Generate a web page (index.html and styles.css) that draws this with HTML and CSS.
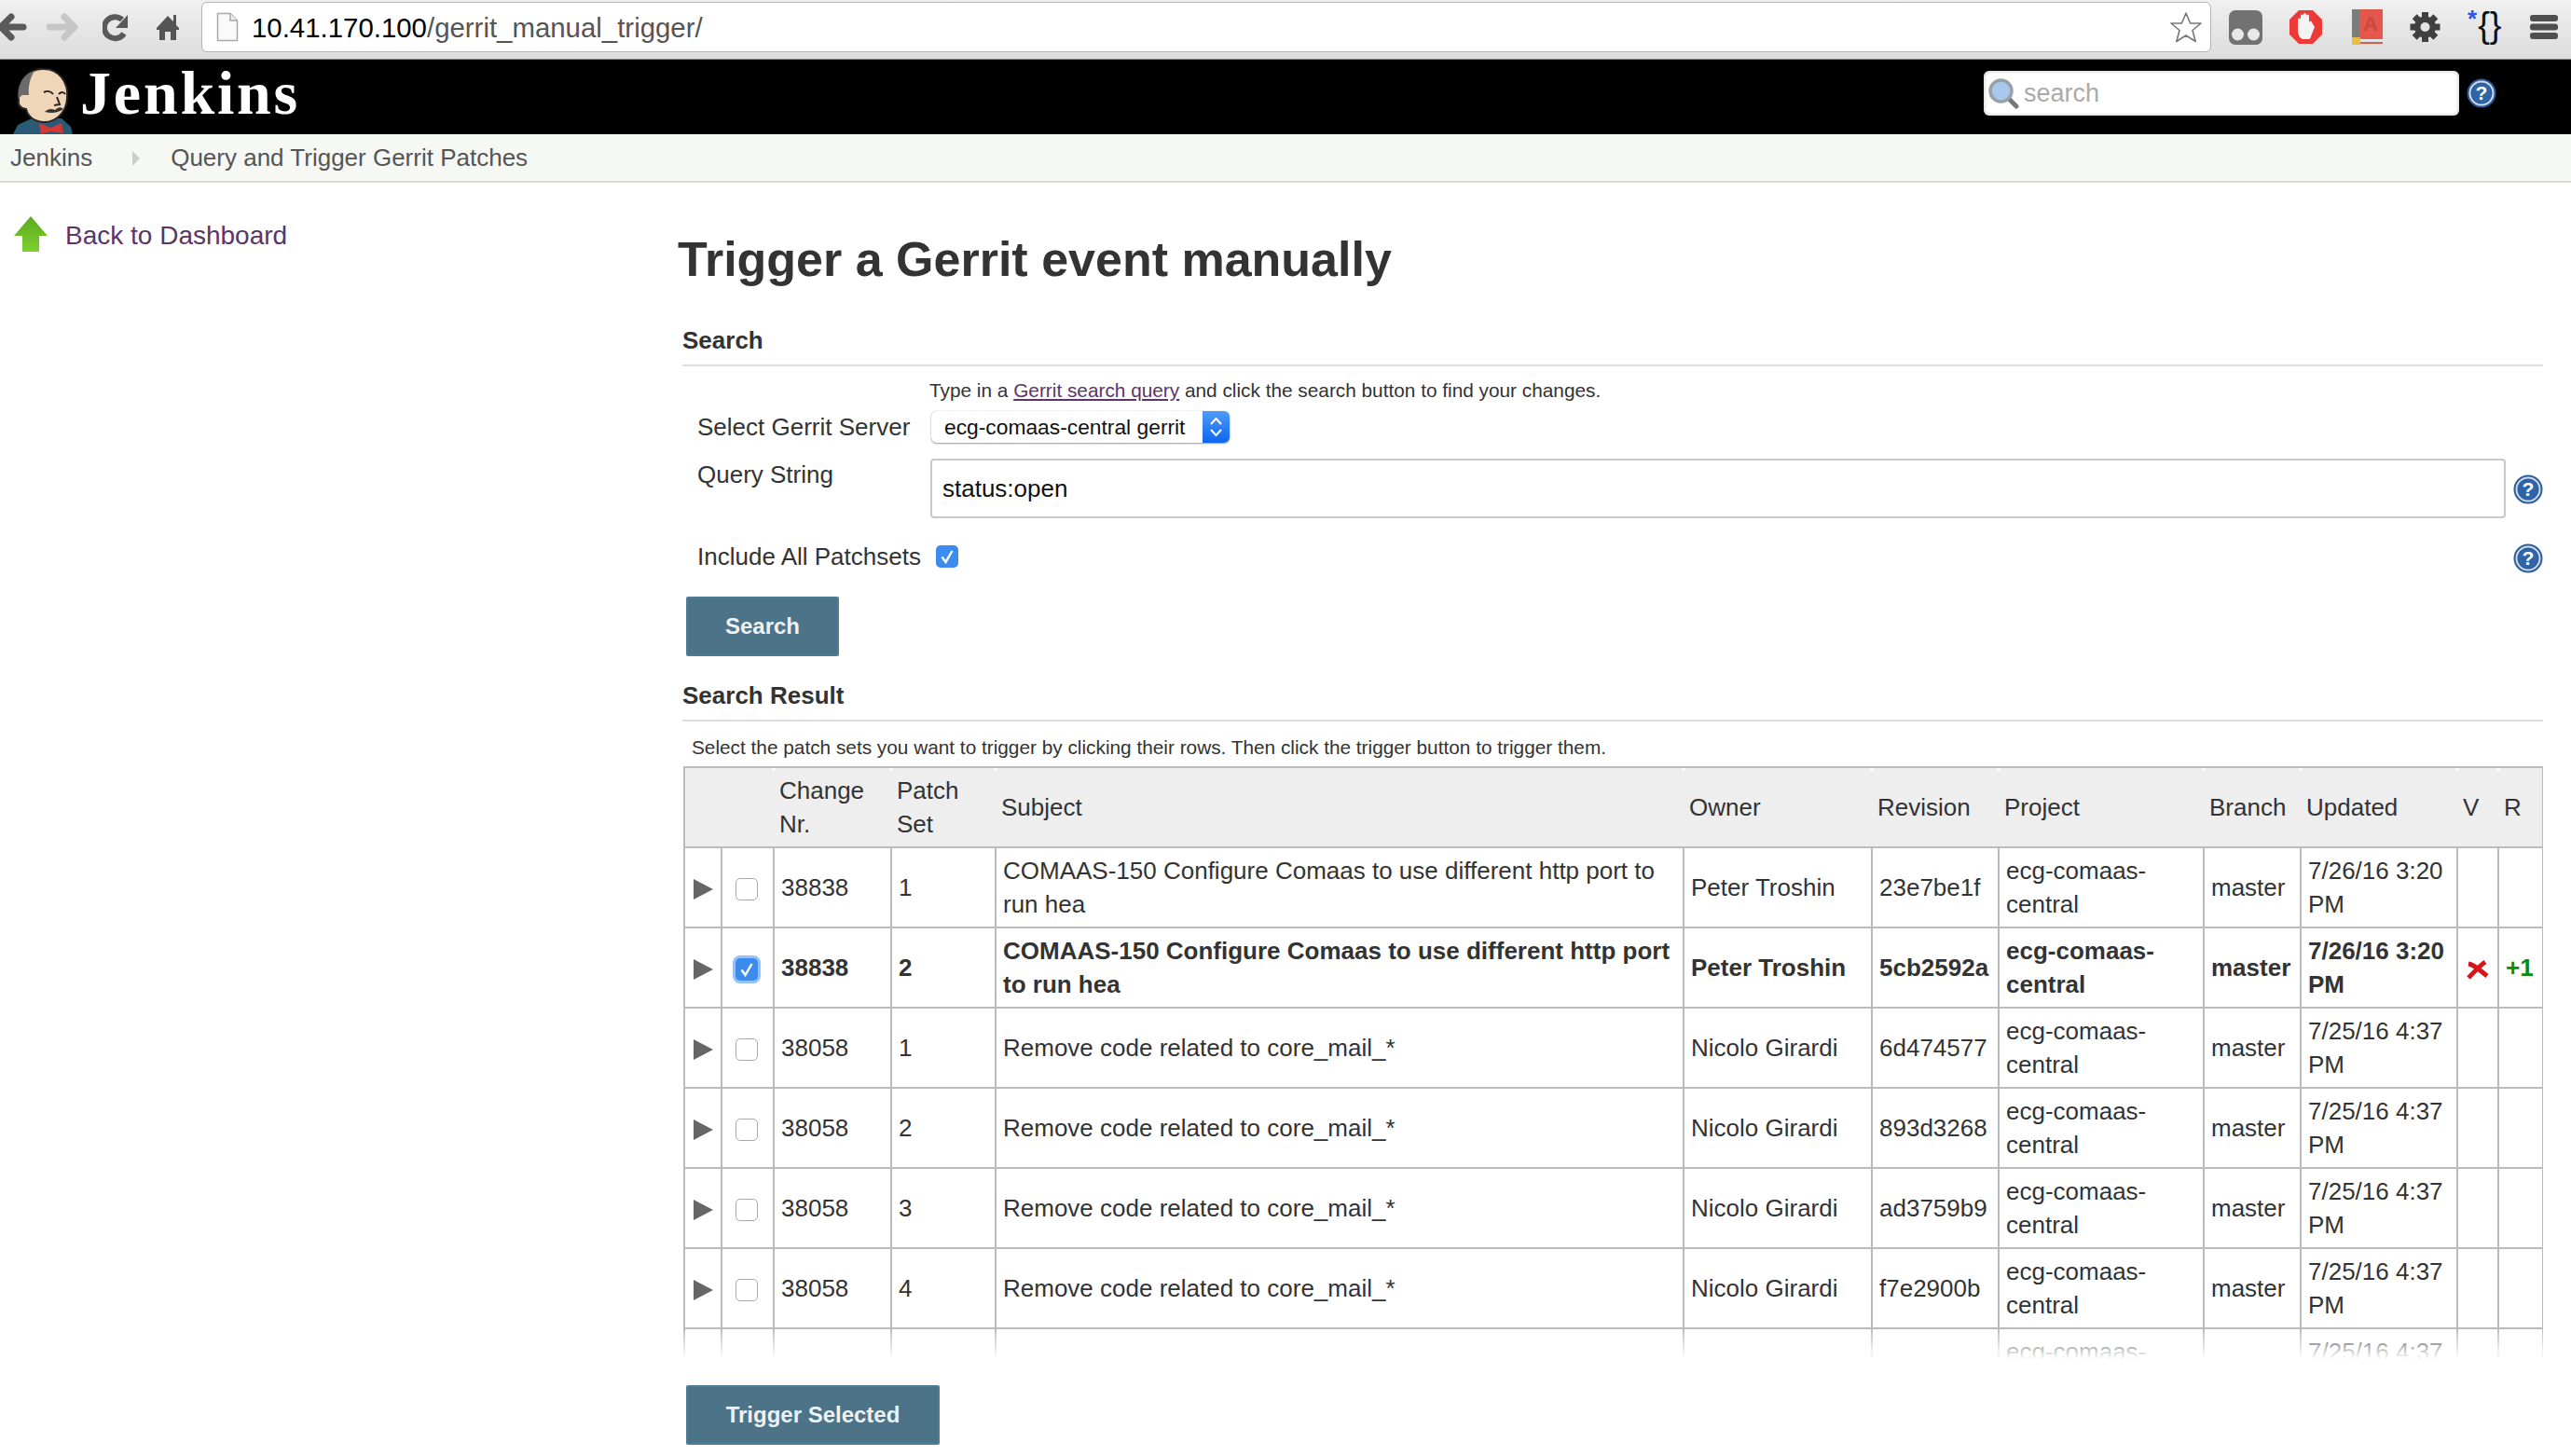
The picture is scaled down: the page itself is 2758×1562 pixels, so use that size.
FILE: index.html
```html
<!DOCTYPE html>
<html>
<head>
  <title>Trigger a Gerrit event manually</title>
  <link rel="stylesheet" href="styles.css">
</head>
<body>
  <svg class="defs" width="0" height="0">
    <symbol id="help" viewBox="0 0 32 32">
      <circle cx="16" cy="16" r="15.5" fill="#2c5c9a"/>
      <circle cx="16" cy="16" r="12.5" fill="none" stroke="#cfdcec" stroke-width="2"/>
      <circle cx="16" cy="16" r="10.5" fill="#2f64a8"/>
      <text x="16" y="23" text-anchor="middle" font-family="Liberation Sans" font-weight="700" font-size="21" fill="#fff">?</text>
    </symbol>
    <symbol id="tick" viewBox="0 0 24 24">
      <path d="M6.5 12.5 L10.5 18 L17.5 6" fill="none" stroke="#fff" stroke-width="2.4"/>
    </symbol>
    <linearGradient id="up" x1="0" y1="0" x2="0" y2="1">
      <stop offset="0" stop-color="#5aa91f"/>
      <stop offset="1" stop-color="#7fd12f"/>
    </linearGradient>
  </svg>

  <!-- browser chrome -->
  <div class="toolbar">
    <div class="nav">
      <svg width="50" height="63"><path d="M25 29H3M12 18L1 29L12 40" fill="none" stroke="#5a5a5a" stroke-width="7" stroke-linecap="round" stroke-linejoin="round"/></svg>
      <svg width="60" height="63"><path d="M3 29H29M19 18L30 29L19 40" fill="none" stroke="#c6c6c6" stroke-width="7" stroke-linecap="round" stroke-linejoin="round"/></svg>
      <svg width="58" height="63"><path d="M23 36A11.5 11.5 0 1 1 21 21" fill="none" stroke="#5a5a5a" stroke-width="6"/><path d="M27 16V30H14Z" fill="#5a5a5a"/></svg>
      <svg width="48" height="63"><path d="M0 30L12 17L18 23V16H21V27L24 30V32H21V43H15V34H9V43H3V32H0Z" fill="#555"/></svg>
    </div>
    <div class="address">
      <svg class="page-icon" width="24" height="32"><path d="M1.5 1.5H15L22.5 9V30.5H1.5Z" fill="#fafafa" stroke="#a8a8a8" stroke-width="1.5"/><path d="M15 1.5V9H22.5" fill="#eee" stroke="#a8a8a8" stroke-width="1.5"/></svg>
      <span class="url"><b>10.41.170.100</b>/gerrit_manual_trigger/</span>
      <svg class="star" width="36" height="35" viewBox="0 0 36 35"><path d="M18 2L22.6 13H34L25 20.5L28.2 32.5L18 26L7.8 32.5L11 20.5L2 13H13.4Z" fill="#fff" stroke="#777" stroke-width="1.6" stroke-linejoin="round"/></svg>
    </div>
    <div class="extensions">
      <svg width="36" height="38"><rect width="36" height="37" y="1" rx="7" fill="#727272"/><circle cx="9.5" cy="27" r="6.5" fill="#e8e8e8"/><circle cx="26.5" cy="27" r="6.5" fill="#e8e8e8"/></svg>
      <svg width="35" height="36"><path d="M10 0H25L35 10V26L25 36H10L0 26V10Z" fill="#ee3a36"/><path d="M9 16V10a1.5 1.5 0 0 1 3 0V6a1.5 1.5 0 0 1 3 0V4.5a1.5 1.5 0 0 1 3 0V6a1.5 1.5 0 0 1 3 0V13a1.5 1.5 0 0 1 3 0L27 18 23 28a3 3 0 0 1-3 3H15C12 31 9 27 9 22Z" fill="#f4f4f4"/></svg>
      <svg width="36" height="38"><rect x="9" y="0" width="27" height="33" fill="#e4574a"/><rect x="3" y="0" width="8" height="33" fill="#7d7d7d"/><rect x="9" y="32" width="27" height="3" fill="#dfe6e6"/><rect x="9" y="35" width="27" height="2" fill="#e4574a"/><rect x="3" y="30" width="9" height="8" fill="#e8bf40"/><text x="23" y="23" text-anchor="middle" font-family="Liberation Sans" font-weight="700" font-size="22" fill="#c94a3f">A</text></svg>
      <svg width="33" height="34"><g stroke="#404040" stroke-width="7"><path d="M16.500 1V33M.5 17H32.500M5.200 5.700L27.800 28.300M27.800 5.700L5.200 28.300"/></g><circle cx="16.500" cy="17" r="11.500" fill="#404040"/><circle cx="16.500" cy="17" r="5" fill="#e4e4e4"/></svg>
      <span class="devtools"><span class="devtools-star">*</span>{}</span>
      <svg width="30" height="28"><rect y="1" width="30" height="7" rx="3" fill="#4f4f4f"/><rect y="10.5" width="30" height="7" rx="3" fill="#4f4f4f"/><rect y="20" width="30" height="7" rx="3" fill="#4f4f4f"/></svg>
    </div>
  </div>

  <!-- jenkins header -->
  <div class="header">
    <svg class="logo" width="86" height="80" viewBox="0 4 86 80">
      <path d="M14 84L19 74L34 67L66 67L76 76L78 84Z" fill="#2b5a76"/>
      <path d="M20 47C17 26 33 13 47 14C63 14 74 28 72 46C71 60 60 72 46 71C37 70 30 65 28 57C22 57 19 52 20 47Z" fill="#f0d6b8" stroke="#2a2522" stroke-width="2"/>
      <path d="M20 47C18 30 26 19 37 16C32 24 30 33 31 42L25 42C23 42 21 44 20 47Z" fill="#6c6a6c"/>
      <path d="M47 39C51 37 55 38 57 41M63 41C66 38 69 39 70 41M61 44L64 52L58 53" fill="none" stroke="#2a2522" stroke-width="2"/>
      <path d="M48 60C53 56 56 57 59 58C62 55 65 54 68 57C62 61 56 62 48 60Z" fill="#3a322c"/>
      <path d="M42 72L54 77L66 72L68 83L55 81L44 84Z" fill="#d33833"/>
    </svg>
    <div class="brand">Jenkins</div>
    <div class="search-box">
      <svg width="33" height="33"><path d="M21 21L30 30" stroke="#777" stroke-width="5" stroke-linecap="round"/><circle cx="13.500" cy="13.500" r="11.500" fill="#a9c8ec" stroke="#98a0a8" stroke-width="3.500"/></svg>
      <span>search</span>
    </div>
    <svg class="help header-help"><use href="#help"/></svg>
  </div>

  <div class="breadcrumb">
    <span>Jenkins</span>
    <span class="crumb-sep"></span>
    <span>Query and Trigger Gerrit Patches</span>
  </div>

  <div class="main">
    <div class="sidebar">
      <svg width="36" height="40"><path d="M18 0L36 21H27V38H9V21H0Z" fill="url(#up)"/></svg>
      <a href="#">Back to Dashboard</a>
    </div>

    <div class="content">
      <h1>Trigger a Gerrit event manually</h1>

      <div class="section-title">Search</div>
      <div class="hint hint-query">Type in a <a href="#">Gerrit search query</a> and click the search button to find your changes.</div>
      <div class="form-row row-server">
        <label>Select Gerrit Server</label>
        <div class="select">
          <span>ecg-comaas-central gerrit</span>
          <div class="stepper"><svg width="29" height="34"><path d="M9 14L14.500 8L20 14M9 20L14.500 26L20 20" fill="none" stroke="#fff" stroke-width="2"/></svg></div>
        </div>
      </div>
      <div class="form-row row-query">
        <label>Query String</label>
        <input class="query" type="text" value="status:open">
        <svg class="help"><use href="#help"/></svg>
      </div>
      <div class="form-row row-patchsets">
        <label>Include All Patchsets</label>
        <span class="box box-form"><svg width="24" height="24"><use href="#tick"/></svg></span>
        <svg class="help"><use href="#help"/></svg>
      </div>
      <button class="btn btn-search">Search</button>

      <div class="section-title result-title">Search Result</div>
      <div class="hint hint-result">Select the patch sets you want to trigger by clicking their rows. Then click the trigger button to trigger them.</div>

      <div class="results">
        <table>
          <colgroup>
            <col class="c-arrow"><col class="c-check"><col class="c-change"><col class="c-patch"><col class="c-subject"><col class="c-owner"><col class="c-rev"><col class="c-project"><col class="c-branch"><col class="c-updated"><col class="c-v"><col class="c-r">
          </colgroup>
          <thead>
            <tr>
              <th></th><th></th><th>Change Nr.</th><th>Patch Set</th><th>Subject</th><th>Owner</th><th>Revision</th><th>Project</th><th>Branch</th><th>Updated</th><th>V</th><th>R</th>
            </tr>
          </thead>
          <tbody>
            <tr>
              <td><span class="arrow"></span></td><td><span class="box"></span></td>
              <td>38838</td><td>1</td><td>COMAAS-150 Configure Comaas to use different http port to run hea</td><td>Peter Troshin</td><td>23e7be1f</td><td>ecg-comaas-central</td><td>master</td><td>7/26/16 3:20 PM</td><td></td><td></td>
            </tr>
            <tr class="selected">
              <td><span class="arrow"></span></td><td><span class="box box-on"><svg width="24" height="24"><use href="#tick"/></svg></span></td>
              <td>38838</td><td>2</td><td>COMAAS-150 Configure Comaas to use different http port to run hea</td><td>Peter Troshin</td><td>5cb2592a</td><td>ecg-comaas-central</td><td>master</td><td>7/26/16 3:20 PM</td>
              <td><svg class="cross" width="24" height="22"><path d="M2 5C9 6 15 13 22 18M20 3C14 7 8 14 2 20" fill="none" stroke="#d8151b" stroke-width="5"/></svg></td><td class="plus">+1</td>
            </tr>
            <tr>
              <td><span class="arrow"></span></td><td><span class="box"></span></td>
              <td>38058</td><td>1</td><td>Remove code related to core_mail_*</td><td>Nicolo Girardi</td><td>6d474577</td><td>ecg-comaas-central</td><td>master</td><td>7/25/16 4:37 PM</td><td></td><td></td>
            </tr>
            <tr>
              <td><span class="arrow"></span></td><td><span class="box"></span></td>
              <td>38058</td><td>2</td><td>Remove code related to core_mail_*</td><td>Nicolo Girardi</td><td>893d3268</td><td>ecg-comaas-central</td><td>master</td><td>7/25/16 4:37 PM</td><td></td><td></td>
            </tr>
            <tr>
              <td><span class="arrow"></span></td><td><span class="box"></span></td>
              <td>38058</td><td>3</td><td>Remove code related to core_mail_*</td><td>Nicolo Girardi</td><td>ad3759b9</td><td>ecg-comaas-central</td><td>master</td><td>7/25/16 4:37 PM</td><td></td><td></td>
            </tr>
            <tr>
              <td><span class="arrow"></span></td><td><span class="box"></span></td>
              <td>38058</td><td>4</td><td>Remove code related to core_mail_*</td><td>Nicolo Girardi</td><td>f7e2900b</td><td>ecg-comaas-central</td><td>master</td><td>7/25/16 4:37 PM</td><td></td><td></td>
            </tr>
            <tr>
              <td><span class="arrow"></span></td><td><span class="box"></span></td>
              <td>38058</td><td>5</td><td>Remove code related to core_mail_*</td><td>Nicolo Girardi</td><td>97f794c6</td><td>ecg-comaas-central</td><td>master</td><td>7/25/16 4:37 PM</td><td></td><td></td>
            </tr>
          </tbody>
        </table>
        <div class="fade"></div>
      </div>

      <button class="btn btn-trigger">Trigger Selected</button>
    </div>
  </div>
</body>
</html>
```

FILE: styles.css
```css
html, body {
  margin: 0;
  height: 1562px;
  overflow: hidden;
  background: #fff;
  color: #333;
  font-family: "Liberation Sans", Arial, sans-serif;
  font-size: 26px;
}

a {
  color: #5c3566;
}

.defs {
  display: block;
  height: 0;
}

/* browser chrome */
.toolbar {
  display: flex;
  align-items: center;
  height: 63px;
  padding-right: 14px;
  background: linear-gradient(#f0f0f0, #dcdcdc);
  border-bottom: 1px solid #8f8f8f;
}

.nav {
  display: flex;
  flex: none;
}

.address {
  display: flex;
  align-items: center;
  flex: 1;
  height: 52px;
  margin-top: -5px;
  margin-right: 19px;
  padding: 0 8px 0 15px;
  background: #fff;
  border: 1px solid #b4b4b4;
  border-radius: 6px;
}

.url {
  flex: 1;
  margin-left: 14px;
  padding-top: 1px;
  color: #555;
  font-size: 29.400px;
}

.url b {
  color: #000;
  font-weight: 400;
}

.extensions {
  display: flex;
  align-items: center;
  flex: none;
  gap: 29px;
  margin-top: -5px;
}

.devtools {
  width: 38px;
  color: #111;
  font-size: 38px;
  line-height: 38px;
  white-space: nowrap;
}

.devtools-star {
  position: relative;
  top: -11px;
  margin-right: 1px;
  color: #2a55f0;
  font-size: 26px;
  font-weight: 700;
}

/* jenkins header */
.header {
  display: flex;
  align-items: flex-start;
  height: 80px;
  background: #000;
}

.logo {
  flex: none;
}

.brand {
  flex: 1;
  color: #fff;
  font-family: "Liberation Serif", serif;
  font-size: 66px;
  font-weight: 700;
  line-height: 72px;
  letter-spacing: 2.800px;
}

.search-box {
  display: flex;
  align-items: center;
  gap: 5px;
  box-sizing: border-box;
  width: 510px;
  height: 48px;
  margin-top: 12px;
  padding-left: 5px;
  background: #fff;
  border-radius: 6px;
  box-shadow: inset 0 0 4px #bbb;
  color: #aaa;
  font-size: 27px;
}

.help {
  display: block;
  flex: none;
  width: 32px;
  height: 32px;
}

.header-help {
  margin: 20px 80px 0 8px;
}

.breadcrumb {
  display: flex;
  align-items: center;
  box-sizing: border-box;
  height: 52px;
  padding-left: 11px;
  background: #f6f8f3;
  border-bottom: 2px solid #d9dcd5;
  color: #555;
  font-size: 26px;
}

.crumb-sep {
  width: 0;
  height: 0;
  margin: 2px 33px 0 43px;
  border-left: 8px solid #ccc;
  border-top: 8px solid transparent;
  border-bottom: 8px solid transparent;
}

/* page */
.main {
  display: flex;
}

.sidebar {
  display: flex;
  flex: none;
  align-items: flex-start;
  gap: 19px;
  box-sizing: border-box;
  width: 732px;
  padding: 36px 0 0 15px;
}

.sidebar a {
  margin-top: 2px;
  font-size: 28px;
  line-height: 38px;
  text-decoration: none;
}

.content {
  width: 1996px;
}

h1 {
  height: 64px;
  margin: 50px 0 0 -5px;
  color: #333;
  font-size: 52px;
  line-height: 64px;
}

.section-title {
  box-sizing: border-box;
  height: 54px;
  margin-top: 29px;
  border-bottom: 2px solid #ddd;
  font-weight: 700;
  line-height: 52px;
}

.result-title {
  margin-top: 16px;
}

.hint {
  font-size: 20.800px;
  line-height: 28px;
}

.hint-query {
  margin: 12px 0 0 265px;
}

.hint-result {
  margin: 14px 0 0 10px;
}

.form-row {
  display: flex;
  align-items: center;
}

.form-row label {
  flex: none;
  width: 250px;
  padding-left: 16px;
  font-size: 26px;
}

.row-server {
  height: 36px;
  margin-top: 7px;
}

.select {
  display: flex;
  align-items: center;
  box-sizing: border-box;
  width: 320px;
  height: 34px;
  margin-left: 1px;
  padding-left: 14px;
  background: #fff;
  border-radius: 6px;
  box-shadow: 0 1px 2px #999, 0 0 1px #aaa;
  color: #111;
  font-size: 22.800px;
  white-space: nowrap;
}

.select span {
  flex: 1;
}

.stepper {
  width: 29px;
  height: 34px;
  background: linear-gradient(#4d9bf8, #0e66ee);
  border-radius: 0 6px 6px 0;
}

.row-query {
  align-items: flex-start;
  margin-top: 16px;
}

.row-query label {
  line-height: 34px;
}

.query {
  box-sizing: border-box;
  width: 1690px;
  height: 64px;
  padding: 0 11px;
  background: #fff;
  border: 2px solid #c8c8c8;
  border-radius: 4px;
  color: #111;
  font-family: inherit;
  font-size: 26px;
  outline: none;
}

.row-query .help {
  margin: 17px 0 0 8px;
}

.row-patchsets {
  height: 34px;
  margin-top: 24px;
}

.row-patchsets label {
  width: 256px;
}

.row-patchsets .help {
  margin-left: auto;
  margin-top: 3px;
}

.btn {
  display: block;
  height: 64px;
  margin-left: 4px;
  padding: 0;
  background: #4d7388;
  border: 2px solid #4f7d96;
  border-radius: 2px;
  color: #eef2f4;
  font-family: inherit;
  font-size: 24px;
  font-weight: 700;
}

.btn-search {
  width: 164px;
  margin-top: 26px;
}

.btn-trigger {
  width: 272px;
  margin-top: 28px;
}

/* results table */
.results {
  position: relative;
  height: 636px;
  margin-top: 6px;
  margin-left: 1px;
  overflow: hidden;
}

table {
  table-layout: fixed;
  width: 1994px;
  border-collapse: collapse;
  line-height: 36px;
}

.c-arrow { width: 40px; }
.c-check { width: 56px; }
.c-change { width: 126px; }
.c-patch { width: 112px; }
.c-subject { width: 738px; }
.c-owner { width: 202px; }
.c-rev { width: 136px; }
.c-project { width: 220px; }
.c-branch { width: 104px; }
.c-updated { width: 168px; }
.c-v { width: 44px; }
.c-r { width: 48px; }

th {
  position: relative;
  height: 84px;
  padding: 0 6px;
  background: #eee;
  border-top: 2px solid #bbb;
  font-weight: 400;
  text-align: left;
}

/* the small white sort notch at the top of each column */
th:nth-child(n+3)::before {
  content: "";
  position: absolute;
  top: 0;
  left: -2px;
  border-top: 4px solid #fff;
  border-left: 2px solid transparent;
  border-right: 2px solid transparent;
}

th:first-child {
  border-left: 2px solid #bbb;
}

th:last-child {
  border-right: 2px solid #bbb;
}

td {
  height: 84px;
  padding: 0 7px;
  border: 2px solid #bbb;
  overflow: hidden;
}

td:nth-child(-n+2) {
  padding: 0;
  text-align: center;
}

.selected td {
  font-weight: 700;
}

.arrow {
  display: inline-block;
  width: 0;
  height: 0;
  vertical-align: middle;
  border-left: 21px solid #666;
  border-top: 11px solid transparent;
  border-bottom: 11px solid transparent;
}

.box {
  display: inline-block;
  box-sizing: border-box;
  width: 24px;
  height: 24px;
  margin-right: 3px;
  vertical-align: middle;
  background: #fff;
  border: 1.500px solid #aaa;
  border-radius: 5px;
}

.box svg {
  display: block;
}

.box-on {
  background: #3c8cf0;
  border: 0;
  box-shadow: 0 0 0 3px #93c2fb;
}

.box-form {
  flex: none;
  background: #3c8cf0;
  border: 0;
}

.cross {
  display: block;
  margin: 4px 0 0 2px;
}

.plus {
  padding-right: 0;
  color: #0a8a0a;
  font-weight: 700;
}

.fade {
  position: absolute;
  left: 0;
  right: 0;
  bottom: 0;
  height: 30px;
  background: linear-gradient(rgba(255, 255, 255, 0.15), #fff);
}
```
